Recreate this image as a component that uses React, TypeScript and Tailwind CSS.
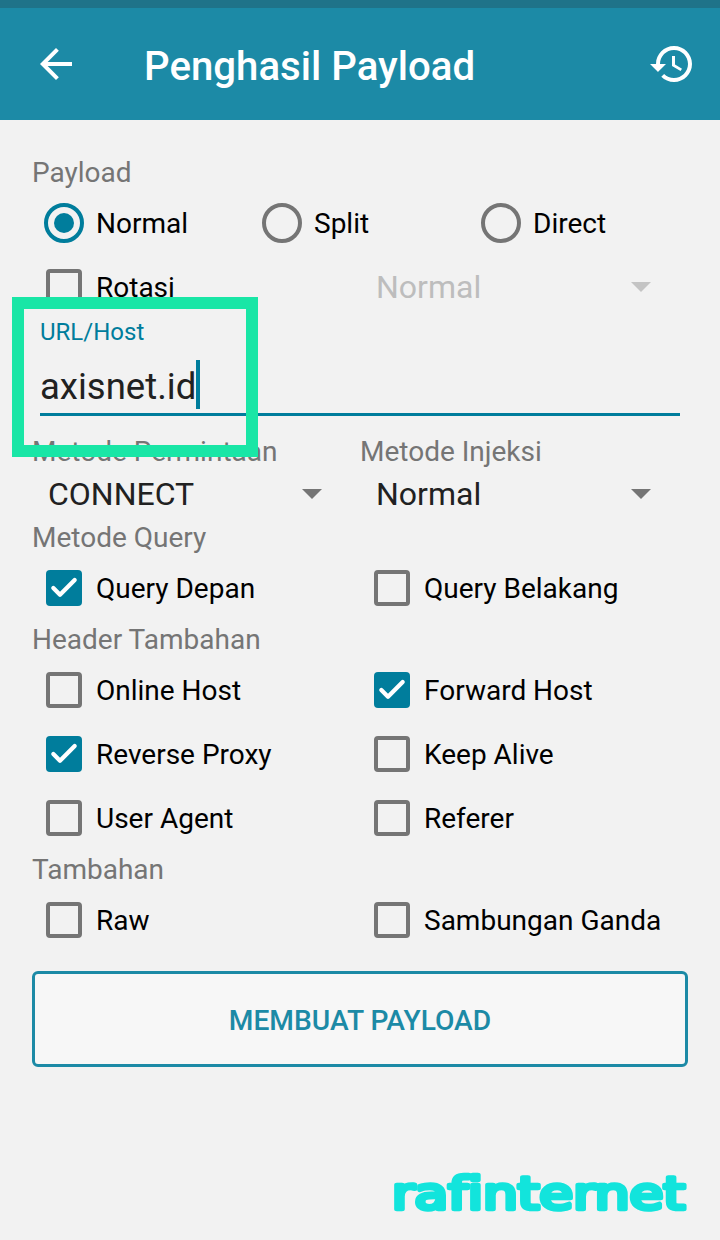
import { Check } from 'lucide-react';
import clsx from 'clsx';

function Label({ children }: { children: string }) {
  return <p className="h-[38px] pt-px pl-8 text-[28px] leading-[38px] whitespace-nowrap text-[#757575]">{children}</p>;
}

function Radio({ label, checked, className }: { label: string; checked?: boolean; className?: string }) {
  return (
    <div className={clsx('flex items-center', className)}>
      <span
        className={clsx(
          'flex h-10 w-10 shrink-0 items-center justify-center rounded-full border-4',
          checked ? 'border-[#007d9c]' : 'border-[#757575]'
        )}
      >
        {checked && <span className="h-5 w-5 rounded-full bg-[#007d9c]" />}
      </span>
      <span className="ml-3 pt-[2px] text-[28px] text-black">{label}</span>
    </div>
  );
}

function Checkbox({ label, checked }: { label: string; checked?: boolean }) {
  return (
    <div className="flex h-16 items-center pl-[14px]">
      <span
        className={clsx(
          'flex h-9 w-9 shrink-0 items-center justify-center rounded-[4px]',
          checked ? 'bg-[#007d9c]' : 'border-4 border-[#757575]'
        )}
      >
        {checked && <Check size={32} strokeWidth={3.2} className="text-white" />}
      </span>
      <span className="ml-[14px] pt-[2px] text-[28px] whitespace-nowrap text-black">{label}</span>
    </div>
  );
}

function Row({ children }: { children: React.ReactNode }) {
  return <div className="grid grid-cols-[328px_329px] pl-8">{children}</div>;
}

function Spinner({ value, disabled }: { value: string; disabled?: boolean }) {
  return (
    <div className="flex h-full items-center justify-between pr-[38px] pl-4">
      <span className={clsx('text-[32px]', disabled ? 'text-[#bdbdbd]' : 'text-[#212121]')}>{value}</span>
      <span
        className={clsx(
          'h-0 w-0 border-x-10 border-t-10 border-x-transparent',
          disabled ? 'border-t-[#c4c4c4]' : 'border-t-[#757575]'
        )}
      />
    </div>
  );
}

export default function App() {
  return (
    <div className="relative h-[1240px] w-[720px] overflow-hidden bg-[#f2f2f2] font-['Roboto',sans-serif]">
      {/* Status + toolbar */}
      <div className="h-2 bg-[#1f7389]" />
      <header className="flex h-[112px] items-center bg-[#1c8aa6] pr-6 pl-8 text-white">
        <svg width="48" height="48" viewBox="0 0 24 24" fill="currentColor">
          <path d="M20 11H7.83l5.59-5.59L12 4l-8 8 8 8 1.41-1.41L7.83 13H20v-2z" />
        </svg>
        <h1 className="ml-16 flex-1 pt-[7px] text-[40.2px] font-medium">Penghasil Payload</h1>
        <svg width="48" height="48" viewBox="0 0 24 24" fill="currentColor">
          <path d="M13 3c-4.97 0-9 4.03-9 9H1l3.89 3.89.07.14L9 12H6c0-3.87 3.13-7 7-7s7 3.13 7 7-3.13 7-7 7c-1.93 0-3.68-.79-4.94-2.06l-1.42 1.42C8.27 19.99 10.51 21 13 21c4.97 0 9-4.03 9-9s-4.03-9-9-9zm-1 5v5l4.28 2.54.72-1.21-3.5-2.08V8H12z" />
        </svg>
      </header>

      <main className="pt-[33px]">
        <Label>Payload</Label>
        <div className="flex h-16 items-center pl-[44px]">
          <Radio label="Normal" checked className="w-[218px]" />
          <Radio label="Split" className="w-[219px]" />
          <Radio label="Direct" />
        </div>
        <div className="h-16">
          <Row>
            <Checkbox label="Rotasi" />
            <Spinner value="Normal" disabled />
          </Row>
        </div>

        {/* URL field */}
        <div className="relative z-10 mx-10 -mt-[7px] h-[104px] border-b-[3px] border-[#007d9c]">
          <p className="pt-[2px] text-[24px] leading-9 text-[#007d9c]">URL/Host</p>
          <p className="mt-[10px] flex h-[49px] items-center text-[36.5px] text-[#212121]">
            <span className="pt-[6px]">axisnet.id</span>
            <span className="h-[49px] w-1 bg-[#007d9c]" />
          </p>
        </div>

        <div className="grid grid-cols-[328px_329px] pt-4 pl-8">
          <p className="h-[38px] pt-px text-[28px] leading-[38px] whitespace-nowrap text-[#757575]">Metode Permintaan</p>
          <p className="h-[38px] pt-px text-[28px] leading-[38px] text-[#757575]">Metode Injeksi</p>
          <div className="h-12">
            <Spinner value="CONNECT" />
          </div>
          <div className="h-12">
            <Spinner value="Normal" />
          </div>
        </div>

        <Label>Metode Query</Label>
        <Row>
          <Checkbox label="Query Depan" checked />
          <Checkbox label="Query Belakang" />
        </Row>
        <Label>Header Tambahan</Label>
        <Row>
          <Checkbox label="Online Host" />
          <Checkbox label="Forward Host" checked />
        </Row>
        <Row>
          <Checkbox label="Reverse Proxy" checked />
          <Checkbox label="Keep Alive" />
        </Row>
        <Row>
          <Checkbox label="User Agent" />
          <Checkbox label="Referer" />
        </Row>
        <Label>Tambahan</Label>
        <Row>
          <Checkbox label="Raw" />
          <Checkbox label="Sambungan Ganda" />
        </Row>

        <button className="mx-8 mt-[19px] flex h-[96px] w-[656px] items-center justify-center rounded-[6px] border-[3px] border-[#1c8aa6] bg-[#f7f7f7] pt-[5px] text-[28.2px] font-medium text-[#1c8aa6]">
          MEMBUAT PAYLOAD
        </button>
      </main>

      {/* Watermark logo */}
      <svg className="absolute top-[1160px] left-[380px]" width="320" height="70" viewBox="0 0 320 70">
        <text
          x="12"
          y="49"
          fill="#12e4dc"
          stroke="#12e4dc"
          strokeWidth="4.5"
          strokeLinejoin="round"
          textLength="293"
          lengthAdjust="spacingAndGlyphs"
          className="font-['DejaVu_Sans',sans-serif] text-[44px] font-normal [font-variant-ligatures:none]"
        >
          rafinternet
        </text>
      </svg>

      {/* Highlight box */}
      <div className="absolute top-[297px] left-3 z-20 h-[160px] w-[246px] border-[12px] border-[#19e6a6]" />
    </div>
  );
}
